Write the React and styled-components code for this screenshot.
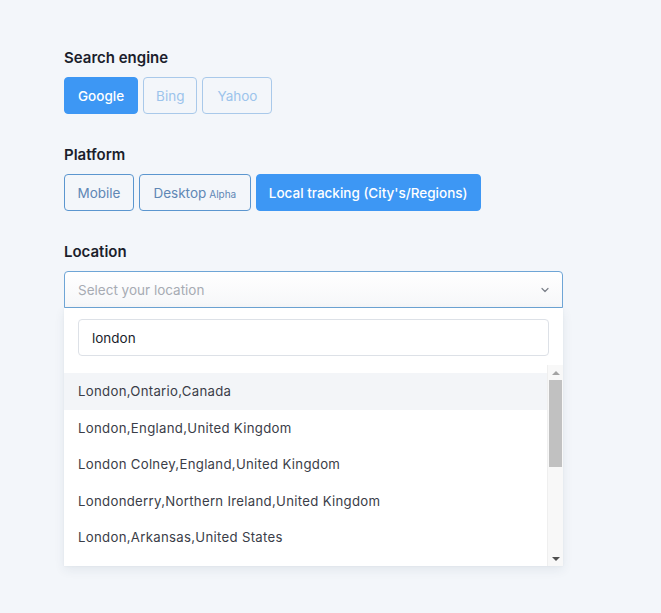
import React from "react";
import styled, { createGlobalStyle } from "styled-components";

const Global = createGlobalStyle`
  html, body { margin: 0; padding: 0; background: #f3f6fa; }
  body { font-family: Inter, "Noto Sans", sans-serif; color: #1b1e2c; }
`;

const Page = styled.div`
  min-height: 613px;
  box-sizing: border-box;
  padding: 47px 64px 0 64px;
  display: flex;
  flex-direction: column;
  gap: 30px;
`;

const Field = styled.section`
  display: flex;
  flex-direction: column;
  gap: 8px;
`;

const Label = styled.h3`
  margin: 0;
  font-size: 15px;
  line-height: 22px;
  font-weight: 600;
  color: #1b1e2c;
`;

const ButtonRow = styled.div`
  display: flex;
  gap: 5px;
`;

const Choice = styled.button`
  height: 37px;
  padding: 0 ${(p) => p.$pad || 13}px;
  border-radius: 4px;
  font-family: inherit;
  font-size: 13.5px;
  cursor: pointer;
  border: 1px solid ${(p) => (p.$active ? "#3d97f4" : p.$muted ? "#a9c9ea" : "#5b96cf")};
  background: ${(p) => (p.$active ? "#3d97f4" : "transparent")};
  color: ${(p) => (p.$active ? "#ffffff" : p.$muted ? "#9cc4ec" : "#5f87b5")};
  font-weight: ${(p) => (p.$active ? 500 : 400)};
`;

const Tag = styled.span`
  font-size: 10px;
  margin-left: 3px;
`;

const SelectWrap = styled.div`
  width: 499px;
  display: flex;
  flex-direction: column;
`;

const SelectBox = styled.div`
  height: 37px;
  box-sizing: border-box;
  border: 1px solid #6ea5d6;
  border-radius: 4px 4px 0 0;
  background: linear-gradient(#ffffff, #f6f7f9);
  display: flex;
  align-items: center;
  justify-content: space-between;
  padding: 0 12px 0 13px;
  font-size: 13.5px;
  color: #a7abb3;
`;

const Panel = styled.div`
  background: #ffffff;
  box-shadow: 0 4px 10px rgba(40, 60, 90, 0.08), 0 0 2px rgba(40, 60, 90, 0.06);
  display: flex;
  flex-direction: column;
  padding-top: 11px;
`;

const SearchInput = styled.div`
  margin: 0 14px;
  height: 37px;
  box-sizing: border-box;
  border: 1px solid #dde1e7;
  border-radius: 4px;
  display: flex;
  align-items: center;
  padding: 0 13px;
  font-size: 13.5px;
  color: #1b1e2c;
`;

const ListArea = styled.div`
  margin-top: 9px;
  height: 201px;
  display: flex;
`;

const Options = styled.ul`
  list-style: none;
  margin: 0;
  padding: 8px 0 0 0;
  flex: 1;
  overflow: hidden;
`;

const Option = styled.li`
  height: 36.5px;
  display: flex;
  align-items: center;
  padding-left: 14px;
  font-size: 13.2px;
  letter-spacing: 0.3px;
  color: #3a3d48;
  background: ${(p) => (p.$hover ? "#f3f5f8" : "transparent")};
`;

const Scrollbar = styled.div`
  width: 15px;
  background: #f8f8f8;
  border-left: 1px solid #efefef;
  display: flex;
  flex-direction: column;
  align-items: center;
`;

const Arrow = styled.div`
  height: 15px;
  width: 15px;
  display: flex;
  align-items: center;
  justify-content: center;
  &::after {
    content: "";
    border-left: 4px solid transparent;
    border-right: 4px solid transparent;
    ${(p) =>
      p.$down
        ? "border-top: 4px solid #505050;"
        : "border-bottom: 4px solid #a3a3a3;"}
  }
`;

const Thumb = styled.div`
  width: 13px;
  height: 87px;
  background: #c1c1c1;
`;

const Track = styled.div`
  flex: 1;
`;

const Chevron = () => (
  <svg width="10" height="10" viewBox="0 0 10 10" fill="none">
    <path d="M2 3.5 L5 6.5 L8 3.5" stroke="#7a7f88" strokeWidth="1.2" strokeLinecap="round" strokeLinejoin="round" />
  </svg>
);

const places = [
  "London,Ontario,Canada",
  "London,England,United Kingdom",
  "London Colney,England,United Kingdom",
  "Londonderry,Northern Ireland,United Kingdom",
  "London,Arkansas,United States",
];

export default function App() {
  return (
    <>
      <Global />
      <Page>
        <Field>
          <Label>Search engine</Label>
          <ButtonRow>
            <Choice $active>Google</Choice>
            <Choice $muted $pad={12}>Bing</Choice>
            <Choice $muted $pad={14}>Yahoo</Choice>
          </ButtonRow>
        </Field>
        <Field>
          <Label>Platform</Label>
          <ButtonRow>
            <Choice $pad={12.5}>Mobile</Choice>
            <Choice $pad={13.5}>
              Desktop<Tag>Alpha</Tag>
            </Choice>
            <Choice $active $pad={12}>Local tracking (City's/Regions)</Choice>
          </ButtonRow>
        </Field>
        <Field>
          <Label>Location</Label>
          <SelectWrap>
            <SelectBox>
              <span>Select your location</span>
              <Chevron />
            </SelectBox>
            <Panel>
              <SearchInput>london</SearchInput>
              <ListArea>
                <Options>
                  {places.map((p, i) => (
                    <Option key={p} $hover={i === 0}>
                      {p}
                    </Option>
                  ))}
                </Options>
                <Scrollbar>
                  <Arrow />
                  <Thumb />
                  <Track />
                  <Arrow $down />
                </Scrollbar>
              </ListArea>
            </Panel>
          </SelectWrap>
        </Field>
      </Page>
    </>
  );
}
